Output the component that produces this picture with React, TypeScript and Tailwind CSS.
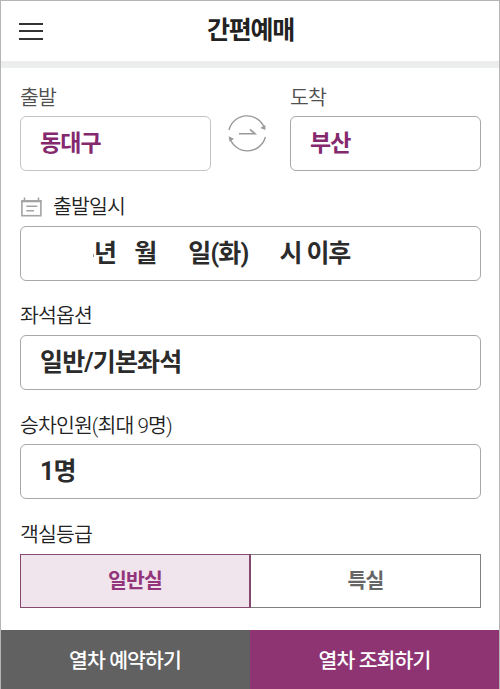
import type { ReactNode } from "react";

function Label({ children, className = "" }: { children: ReactNode; className?: string }) {
  return (
    <div className={`flex h-[30px] items-center whitespace-pre pt-[2px] text-[20.5px] font-[350] leading-none tracking-[-0.9px] ${className}`}>
      {children}
    </div>
  );
}

function Field({ children, className = "" }: { children: ReactNode; className?: string }) {
  return (
    <div className={`flex h-[55px] items-center whitespace-pre rounded-[6px] border pb-[1px] pl-[19px] font-bold leading-none tracking-[-0.85px] ${className}`}>
      {children}
    </div>
  );
}

function SwapIcon() {
  return (
    <svg className="mr-[7px] mt-[30px] h-[42px] w-[40px]" viewBox="0 0 40 42" fill="none" stroke="#999" strokeWidth="1.4">
      <path d="M2 18 A18.6 18.8 0 0 1 37.6 16.5" />
      <path d="M38.4 25 A18.6 18.8 0 0 1 2.8 26" />
      <path d="M33.3 16 L38.4 18 L38.4 13 Z" fill="#999" stroke="none" />
      <path d="M1.6 24.2 L7 26.8 L2.7 29.8 Z" fill="#999" stroke="none" />
      <path d="M12 21.8 H28 L23 17.4" strokeWidth="1.6" />
    </svg>
  );
}

function CalendarIcon() {
  return (
    <svg className="mr-[11px] mt-[1px] h-[21px] w-[22px]" viewBox="0 0 22 21" fill="none" stroke="#a3a3a3">
      <rect x="1.9" y="4.2" width="19" height="14.5" strokeWidth="1.6" />
      <path d="M1.2 4.2 H21.7" strokeWidth="2.2" />
      <path d="M4.5 0.5 V4 M18.5 0.5 V4" strokeWidth="1.6" />
      <path d="M6.3 9.2 H17.3 M6.3 13.7 H14" strokeWidth="1.4" />
    </svg>
  );
}

export default function App() {
  return (
    <div className="flex h-[689px] w-[500px] flex-col border border-b-0 border-[#b5b5b5] bg-white font-[Roboto,'Noto_Sans_CJK_KR',sans-serif]">
      <header className="grid h-[60px] shrink-0 grid-cols-[1fr_auto_1fr] items-center pl-[18px]">
        <div className="flex w-[24px] flex-col gap-[5.5px]">
          <span className="h-[2px] bg-[#333]" />
          <span className="h-[2px] bg-[#333]" />
          <span className="h-[2px] bg-[#333]" />
        </div>
        <h1 className="mb-px mr-[17px] text-[25px] font-bold leading-none tracking-[-1.2px] text-[#222]">간편예매</h1>
      </header>
      <div className="h-[7px] shrink-0 bg-[#eceeed]" />

      <main className="flex h-[562px] shrink-0 flex-col pl-[19px] pr-[18px] pt-[14px]">
        <div className="flex justify-between">
          <div className="w-[191px]">
            <Label className="text-[#505050]">출발</Label>
            <Field className="mt-[4px] border-[#c4c4c4] text-[23px] text-[#85296e]">동대구</Field>
          </div>
          <SwapIcon />
          <div className="w-[191px]">
            <Label className="text-[#505050]">도착</Label>
            <Field className="mt-[4px] border-[#a8a8a8] text-[23px] text-[#85296e]">부산</Field>
          </div>
        </div>

        <Label className="mt-[20px] text-[#222]">
          <CalendarIcon />
          출발일시
        </Label>
        <Field className="mt-[5px] border-[#a8a8a8] text-[25px] text-[#2b2b2b]">
          <span className="ml-[53px] mt-[4px] h-[3px] w-px bg-[#999]" />
          <span>년</span>
          <span className="ml-[18px]">월</span>
          <span className="ml-[32px]">일(화)</span>
          <span className="ml-[31px] tracking-[-1.1px]">시 이후</span>
        </Field>

        <Label className="mt-[19px] text-[#222]">좌석옵션</Label>
        <Field className="mt-[5px] border-[#a8a8a8] text-[25px] text-[#2b2b2b]">일반/기본좌석</Field>

        <Label className="mt-[20px] text-[#222]">승차인원(최대 9명)</Label>
        <Field className="mt-[4px] border-[#a8a8a8] text-[25px] text-[#2b2b2b]">1명</Field>

        <Label className="mt-[20px] text-[#222]">객실등급</Label>
        <div className="mt-[5px] flex h-[54px] text-[20.5px] font-bold leading-none tracking-[-0.9px]">
          <button className="flex w-[231px] items-center justify-center border border-r-2 border-[#85486f] bg-[#f0e4ed] text-[#92357a]">일반실</button>
          <button className="flex w-[230px] items-center justify-center border border-l-0 border-[#808080] text-[#666]">특실</button>
        </div>
      </main>

      <footer className="flex h-[59px] shrink-0 text-[20.5px] font-medium leading-none tracking-[-0.9px] text-white">
        <button className="flex w-[249px] items-center justify-center bg-[#616161] pr-[1px] pt-[4px]">열차 예약하기</button>
        <button className="flex w-[249px] items-center justify-center bg-[#8e3473] pt-[4px]">열차 조회하기</button>
      </footer>
    </div>
  );
}
